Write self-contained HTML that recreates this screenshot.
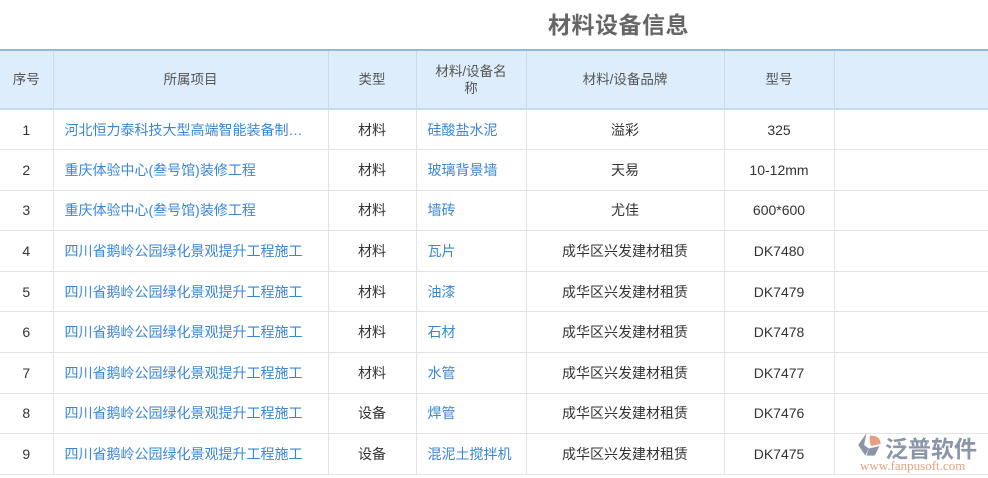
<!DOCTYPE html>
<html><head><meta charset="utf-8"><style>
body{margin:0;width:988px;height:478px;overflow:hidden;background:#fff;font-family:"Liberation Sans","Noto Sans CJK SC",sans-serif;position:relative}
.t{position:absolute;left:548px;top:6px;font-size:23px;font-weight:bold;color:#666;letter-spacing:0.5px}
table{position:absolute;left:0;top:49px;border-collapse:collapse;table-layout:fixed;width:989px;font-size:14px}
tr.h{height:59px}
tr.r{height:40.6px}
th{background:#deedfb;color:#555;font-weight:normal;padding:0;border-right:1px solid #c6dbee;border-top:2px solid #8fb8de;border-bottom:2px solid #c6dbee;line-height:17px;font-size:13.5px}
td{border-right:1px solid #e3e3e3;border-bottom:1px solid #e3e3e3;text-align:center;color:#333;padding:0}
td.l{text-align:left;padding-left:11px;color:#3a86d6;white-space:nowrap;overflow:hidden}
td.b{color:#3a86d6;text-align:left;padding-left:11px}
.logo{position:absolute;left:857px;top:432px}
</style></head><body>
<div class="t">材料设备信息</div>
<table>
<colgroup><col style="width:53px"><col style="width:275px"><col style="width:88px"><col style="width:110px"><col style="width:198px"><col style="width:110px"><col></colgroup>
<tr class="h"><th>序号</th><th>所属项目</th><th>类型</th><th>材料/设备名<br>称</th><th>材料/设备品牌</th><th>型号</th><th></th></tr>
<tr class="r"><td>1</td><td class="l">河北恒力泰科技大型高端智能装备制…</td><td>材料</td><td class="b">硅酸盐水泥</td><td>溢彩</td><td>325</td><td></td></tr>
<tr class="r"><td>2</td><td class="l">重庆体验中心(叁号馆)装修工程</td><td>材料</td><td class="b">玻璃背景墙</td><td>天易</td><td>10-12mm</td><td></td></tr>
<tr class="r"><td>3</td><td class="l">重庆体验中心(叁号馆)装修工程</td><td>材料</td><td class="b">墙砖</td><td>尤佳</td><td>600*600</td><td></td></tr>
<tr class="r"><td>4</td><td class="l">四川省鹅岭公园绿化景观提升工程施工</td><td>材料</td><td class="b">瓦片</td><td>成华区兴发建材租赁</td><td>DK7480</td><td></td></tr>
<tr class="r"><td>5</td><td class="l">四川省鹅岭公园绿化景观提升工程施工</td><td>材料</td><td class="b">油漆</td><td>成华区兴发建材租赁</td><td>DK7479</td><td></td></tr>
<tr class="r"><td>6</td><td class="l">四川省鹅岭公园绿化景观提升工程施工</td><td>材料</td><td class="b">石材</td><td>成华区兴发建材租赁</td><td>DK7478</td><td></td></tr>
<tr class="r"><td>7</td><td class="l">四川省鹅岭公园绿化景观提升工程施工</td><td>材料</td><td class="b">水管</td><td>成华区兴发建材租赁</td><td>DK7477</td><td></td></tr>
<tr class="r"><td>8</td><td class="l">四川省鹅岭公园绿化景观提升工程施工</td><td>设备</td><td class="b">焊管</td><td>成华区兴发建材租赁</td><td>DK7476</td><td></td></tr>
<tr class="r"><td>9</td><td class="l">四川省鹅岭公园绿化景观提升工程施工</td><td>设备</td><td class="b">混泥土搅拌机</td><td>成华区兴发建材租赁</td><td>DK7475</td><td></td></tr>
</table>
<div class="logo">
<svg width="26" height="26" viewBox="0 0 22 22" style="position:absolute;left:0;top:0"><path d="M8 1 L1 11 L7 20 L10 14 L6 11 Z" fill="#8a96a8"/><path d="M11 3 Q20 3 20 10 L12 12 Q10 7 11 3Z" fill="#e3a285"/><path d="M10 14 L19 12 L15 20 L8 20Z" fill="#8a96a8"/></svg>
<div style="position:absolute;left:28px;top:-2px;font-size:23px;color:#8a96a8;font-weight:bold;white-space:nowrap;letter-spacing:0px">泛普软件</div>
<div style="position:absolute;left:3px;top:26px;font-size:13px;color:#e3a285;font-family:'Liberation Serif',serif;white-space:nowrap">www.fanpusoft.com</div>
</div>
</body></html>
